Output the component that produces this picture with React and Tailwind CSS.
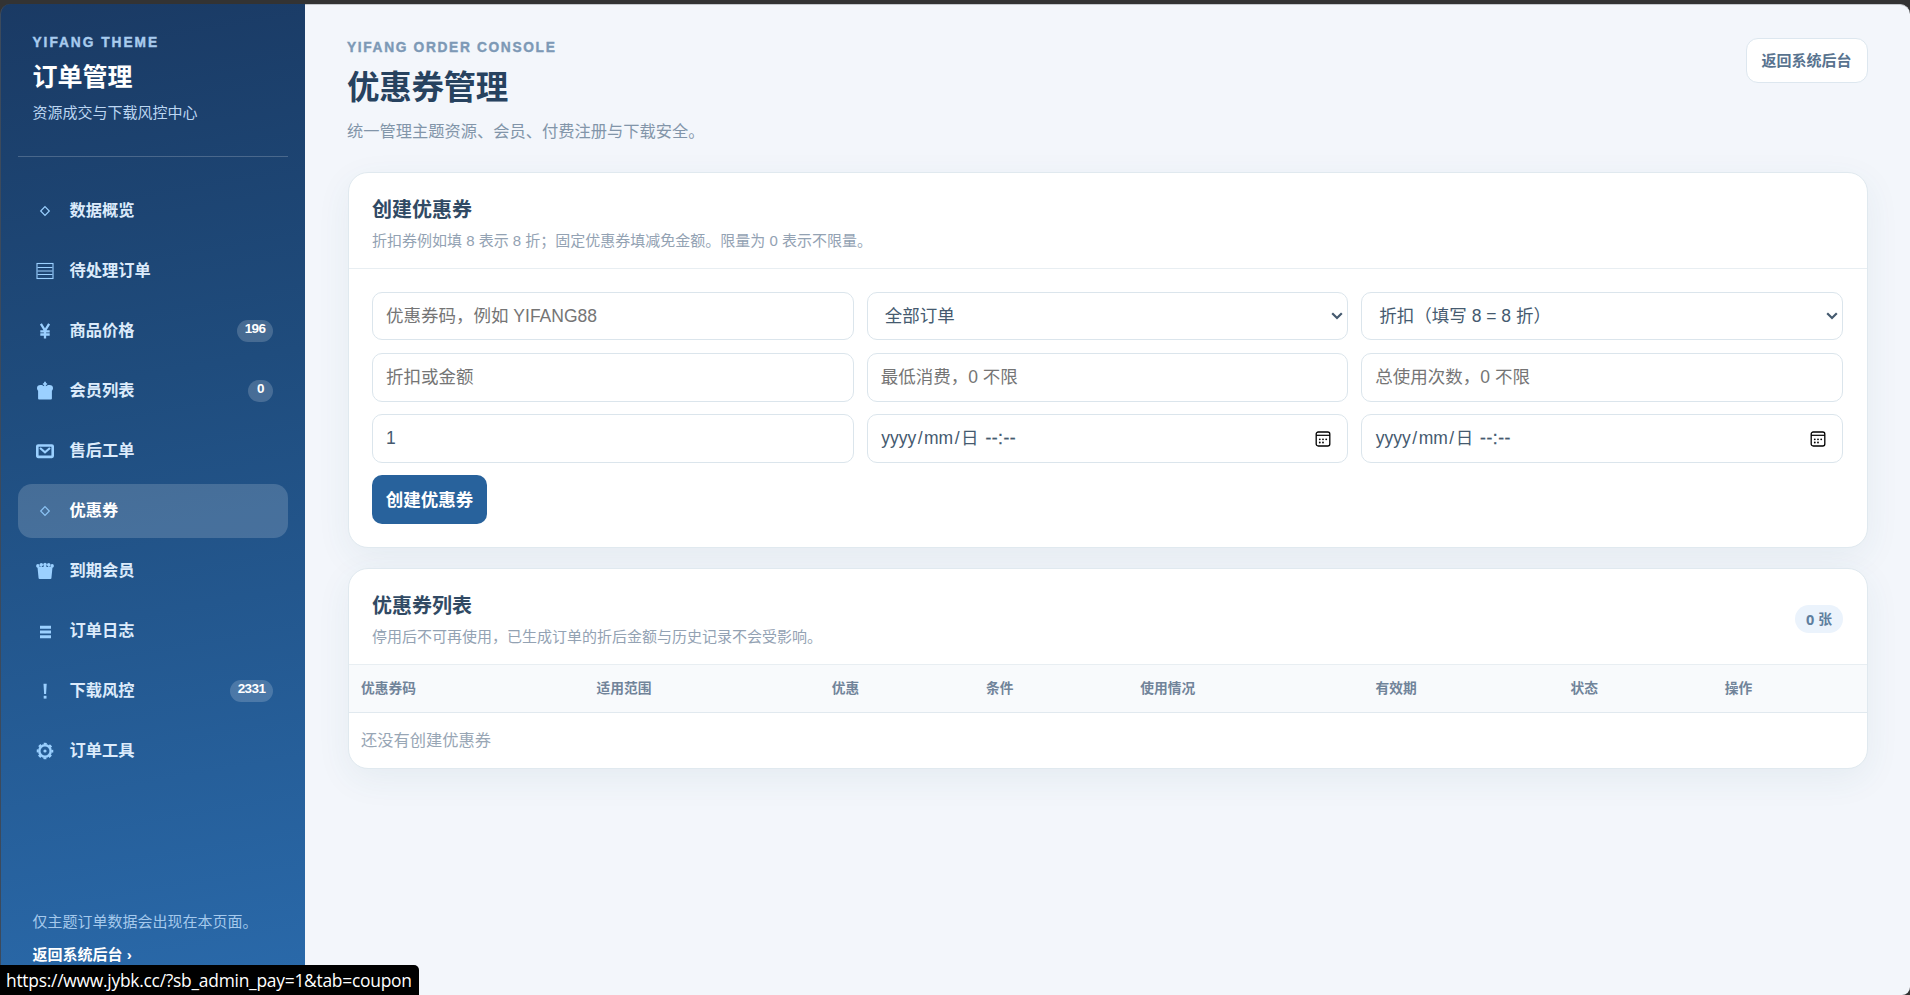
import React from "react";

const FONT = "font-['Liberation_Sans','Noto_Sans_CJK_SC',sans-serif]";

const icons = {
  diamond: <path d="M9 4.7 13.3 9 9 13.3 4.7 9Z" fill="none" stroke="currentColor" strokeWidth="1.2" />,
  list: (
    <g fill="none" stroke="currentColor" strokeWidth="1.1">
      <rect x="1" y="1.500" width="16" height="15" />
      <path d="M1.500 5.500h15M1.500 9h15M1.500 12.500h15" />
    </g>
  ),
  yen: (
    <path d="M4.900 1.800 9 8.600 13.100 1.800M9 8.200V16.400M4.300 9.300h9.400M4.300 12.500h9.400" fill="none" stroke="currentColor" strokeWidth="2.300" />
  ),
  crown: (
    <path
      d="M8.100 -0.300h1.800v1.500h1.200v1.500H9.900v1.500c1-.9 2.100-1.200 3.500-1.200 2.300 0 3.600 1.200 3.600 2.900 0 1.200-.4 2-1.100 2.800v7.900c0 .6-.3.900-.9.900H3c-.6 0-.9-.3-.9-.9V8.700C1.400 7.900 1 7.100 1 5.900 1 4.200 2.300 3 4.600 3c1.400 0 2.500.3 3.500 1.200V2.700H6.900V1.200h1.200Z"
      fill="currentColor"
    />
  ),
  mail: (
    <g>
      <rect x="1.300" y="3.500" width="15.400" height="11.400" rx="0.800" fill="none" stroke="currentColor" strokeWidth="2.600" />
      <path d="M4 6 9 10.300 14 6" fill="none" stroke="currentColor" strokeWidth="2.200" />
    </g>
  ),
  queen: (
    <g fill="currentColor">
      <path d="M2.600 16.200 1.400 4.200 4.600 6.400 4.400 3 7.100 6 8.200 2.200h1.600L10.900 6l2.700-3-.2 3.400 3.200-2.200-1.200 12c-.1.600-.4.800-1 .8H3.600c-.6 0-.9-.2-1-.8Z" />
      <path d="M2.500 5h13l-1 4H3.500Z" />
      <circle cx="1.900" cy="3.900" r="1.800" />
      <circle cx="5.300" cy="2.800" r="1.750" />
      <circle cx="9" cy="2.400" r="1.750" />
      <circle cx="12.700" cy="2.800" r="1.750" />
      <circle cx="16.100" cy="3.900" r="1.800" />
    </g>
  ),
  bars: <path d="M4 5.200h11M4 10h11M4 14.800h11" stroke="currentColor" strokeWidth="2.900" />,
  bang: (
    <g fill="currentColor">
      <path d="M7.500 1.800h3.200l-.6 10.200h-2Z" />
      <rect x="7.700" y="13.800" width="2.800" height="2.800" />
    </g>
  ),
  gear: (
    <g fill="none" stroke="currentColor">
      <circle cx="9" cy="9" r="5.700" strokeWidth="2.500" />
      <circle cx="9" cy="9" r="7.400" strokeWidth="1.800" strokeDasharray="3 2.812" strokeDashoffset="1.500" />
      <circle cx="9" cy="9" r="1.600" fill="currentColor" stroke="none" />
    </g>
  ),
};

const nav = [
  ["diamond", "数据概览"],
  ["list", "待处理订单"],
  ["yen", "商品价格", "196"],
  ["crown", "会员列表", "0"],
  ["mail", "售后工单"],
  ["diamond", "优惠券", null, true],
  ["queen", "到期会员"],
  ["bars", "订单日志"],
  ["bang", "下载风控", "2331"],
  ["gear", "订单工具"],
];

function NavItem({ icon, label, badge, active }) {
  return (
    <a
      className={`flex h-[54px] items-center rounded-[14px] pl-[18px] pr-[15px] text-[16.25px] font-bold ${
        active ? "bg-white/[0.17] text-white" : "text-[#dcebfb]"
      }`}
    >
      <svg viewBox="0 0 18 18" className={`mb-px size-[18px] shrink-0 overflow-visible ${active ? "text-[#8cc4f5]" : "text-[#9bd0ff]"}`}>
        {icons[icon]}
      </svg>
      <span className="mb-0.5 ml-[15.500px] flex-1 leading-6">{label}</span>
      {badge && (
        <span className="h-[22px] min-w-[25px] rounded-full bg-white/[0.18] px-[7.500px] text-center text-[13.5px] leading-[18.5px] tracking-[-0.55px] text-white">
          {badge}
        </span>
      )}
    </a>
  );
}

function Sidebar() {
  return (
    <aside className="flex w-[305px] shrink-0 flex-col rounded-tl-[10px] border-l border-[#3c4a5c] bg-[linear-gradient(170deg,#1a3a64_0%,#1f4c7d_38%,#2a6aab_100%)] pl-[17px] pr-[17px]">
      <div className="flex h-[153px] flex-col border-b border-white/20 pl-[14.500px] pt-[30px]">
        <div className="text-[13.75px] font-bold leading-[18px] tracking-[1.95px] text-[#a8cbee] [-webkit-text-stroke:0.4px]">YIFANG THEME</div>
        <div className="mt-[7px] text-[25px] font-bold leading-[36px] text-white">订单管理</div>
        <div className="mt-[7px] text-[15px] leading-[22px] text-[#bcd6f2]">资源成交与下载风控中心</div>
      </div>
      <nav className="mt-[27px] flex flex-col gap-1.5">
        {nav.map(([icon, label, badge, active]) => (
          <NavItem key={label} icon={icon} label={label} badge={badge} active={active} />
        ))}
      </nav>
      <div className="mt-auto pb-[29px] pl-[14.500px] text-[15px] leading-[22px] text-[#a5c9ec]">
        <p>仅主题订单数据会出现在本页面。</p>
        <a className="mt-[11px] block font-bold text-white">返回系统后台 ›</a>
      </div>
    </aside>
  );
}

const FIELD =
  "flex w-full min-w-0 items-center rounded-[10px] border border-[#dbe5ec] bg-white px-[13px] text-[17.5px] text-[#455a6f]";

function TextField({ placeholder, value, short }) {
  return (
    <input
      className={`${FIELD} ${short ? "h-[48px]" : "h-[49px]"} outline-none placeholder:text-[#757575]`}
      placeholder={placeholder}
      defaultValue={value}
    />
  );
}

function SelectField({ value }) {
  return (
    <button type="button" className="flex h-[48px] w-full items-center justify-between rounded-[10px] border border-[#dbe5ec] bg-white pl-[17px] pr-1 text-[17.5px] text-[#455a6f]">
      <span>{value}</span>
      <svg viewBox="0 0 12 8" className="h-2 w-3 text-[#455a6f]">
        <path d="M1.200 1.200 6 6 10.800 1.200" fill="none" stroke="currentColor" strokeWidth="2.200" />
      </svg>
    </button>
  );
}

function DateField() {
  return (
    <div className={`${FIELD} h-[49px] justify-between`}>
      <span className="pl-[0.500px]">
        yyyy<span className="px-[1.500px]">/</span>mm<span className="px-[1.500px]">/</span>日{" "}
        <span className="ml-0.5 tracking-[0.5px] [-webkit-text-stroke:0.3px]">--:--</span>
      </span>
      <svg viewBox="0 0 16 16" className="mr-[3px] size-4 text-black">
        <rect x="1.200" y="1" width="13.600" height="14" rx="2" fill="none" stroke="currentColor" strokeWidth="1.300" />
        <path d="M1.200 4.300h13.600" stroke="currentColor" strokeWidth="1.200" />
        <g fill="currentColor">
          <circle cx="4.800" cy="8.300" r="0.900" />
          <circle cx="8" cy="8.300" r="0.900" />
          <circle cx="11.200" cy="8.300" r="0.900" />
          <circle cx="4.800" cy="11.500" r="0.900" />
          <circle cx="8" cy="11.500" r="0.900" />
        </g>
      </svg>
    </div>
  );
}

function Card({ title, desc, extra, children }) {
  return (
    <section className="overflow-hidden rounded-[20px] border border-[#e0e9ef] bg-white shadow-[0_10px_35px_rgba(40,95,115,0.07)]">
      <div className="flex h-[96px] items-center justify-between border-b border-[#e8eef2] pl-[23px] pr-6">
        <div className="pt-[5px]">
          <h2 className="text-[20px] font-bold leading-[30px] text-[#314a64]">{title}</h2>
          <p className="mt-[5px] text-[15px] leading-[22px] text-[#93a2b3]">{desc}</p>
        </div>
        {extra}
      </div>
      {children}
    </section>
  );
}

const columns = ["优惠券码", "适用范围", "优惠", "条件", "使用情况", "有效期", "状态", "操作"];

export default function App() {
  return (
    <div className={`relative flex h-[995px] w-full overflow-hidden bg-[#333] pt-1 ${FONT}`}>
      <Sidebar />
      <main className="flex-1 rounded-br-[8px] rounded-tr-[10px] border-t border-[#c4c8cd] bg-[#f3f6fb] pl-[43px] pr-[42px]">
        <header className="flex h-[167px] items-start justify-between">
          <div className="-ml-px pt-[34px]">
            <div className="text-[13.75px] font-bold leading-[18px] tracking-[1.65px] text-[#7d99b6] [-webkit-text-stroke:0.4px]">YIFANG ORDER CONSOLE</div>
            <h1 className="mt-[7px] text-[32.5px] font-bold leading-[48px] tracking-[-0.3px] text-[#27425f]">优惠券管理</h1>
            <p className="mt-[7px] text-[16.25px] leading-6 text-[#8295a9]">统一管理主题资源、会员、付费注册与下载安全。</p>
          </div>
          <a className="mt-[33px] flex h-[45px] w-[122px] items-center justify-center rounded-[12px] border border-[#dde7ef] bg-white pr-px pt-px text-[15px] font-bold text-[#58738f]">
            返回系统后台
          </a>
        </header>

        <div className="flex flex-col gap-5">
          <Card title="创建优惠券" desc="折扣券例如填 8 表示 8 折；固定优惠券填减免金额。限量为 0 表示不限量。">
            <div className="grid h-[278px] auto-rows-[49px] grid-cols-3 content-start gap-x-[13px] gap-y-3 pl-[23px] pr-6 pt-[23px]">
              <TextField placeholder="优惠券码，例如 YIFANG88" short />
              <SelectField value="全部订单" />
              <SelectField value="折扣（填写 8 = 8 折）" />
              <TextField placeholder="折扣或金额" />
              <TextField placeholder="最低消费，0 不限" />
              <TextField placeholder="总使用次数，0 不限" />
              <TextField value="1" />
              <DateField />
              <DateField />
              <button type="button" className="h-[49px] w-[115px] rounded-[10px] bg-[#28629c] pt-px text-[17.5px] font-bold text-white">
                创建优惠券
              </button>
            </div>
          </Card>

          <Card
            title="优惠券列表"
            desc="停用后不可再使用，已生成订单的折后金额与历史记录不会受影响。"
            extra={
              <span className="mt-[5px] flex h-7 w-[48px] items-center justify-center rounded-full bg-[#ebf3fc] text-[13.75px] font-bold leading-5 text-[#5f7f9f]">
                <span className="mr-1 font-['Noto_Sans'] text-[14.5px] leading-5">0</span>
                <span className="pt-px">张</span>
              </span>
            }
          >
            <div className="grid h-[48px] grid-cols-[235.400px_235.400px_154.200px_154.200px_235.400px_195px_154.200px_1fr] items-center border-b border-[#e1e9ef] bg-[#f8fafc] pl-[12px] text-[13.75px] font-bold text-[#71849a]">
              {columns.map((c) => (
                <span key={c} className="pt-px">
                  {c}
                </span>
              ))}
            </div>
            <div className="flex h-[55px] items-center pl-[12px] text-[16.25px] text-[#98a6b5]">还没有创建优惠券</div>
          </Card>
        </div>
      </main>

      <div className="absolute bottom-0 left-0 flex h-[30px] w-[419px] items-center whitespace-nowrap rounded-tr-[5px] bg-black pl-[6px] font-['Open_Sans','Noto_Sans',sans-serif] text-[17.4px] tracking-[-0.25px] text-white">
        https://www.jybk.cc/?sb_admin_pay=1&amp;tab=coupon
      </div>
    </div>
  );
}
